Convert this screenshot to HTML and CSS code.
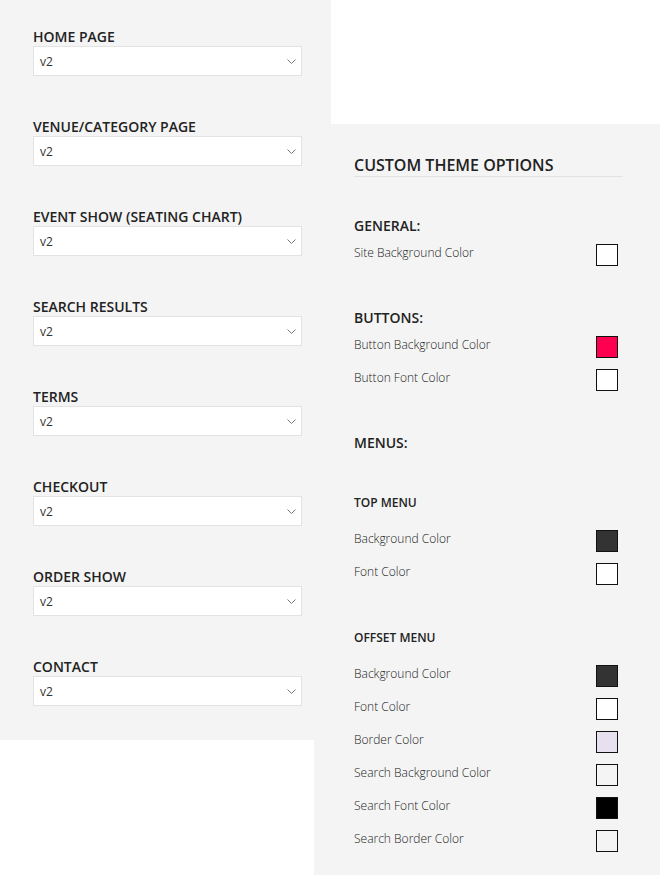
FILE: index.html
```html
<!DOCTYPE html>
<html>
<head>
<meta charset="utf-8">
<link rel="stylesheet" href="styles.css">
</head>
<body>
<div class="page">
  <div class="pages-panel">
    <div class="field">
      <div class="field-label">HOME PAGE</div>
      <div class="select"><span>v2</span><svg class="chev" width="9" height="5" viewBox="0 0 9 5"><path d="M0.5 0.5 L4.5 4.5 L8.5 0.5" fill="none" stroke="#777" stroke-width="1"/></svg></div>
    </div>
    <div class="field">
      <div class="field-label">VENUE/CATEGORY PAGE</div>
      <div class="select"><span>v2</span><svg class="chev" width="9" height="5" viewBox="0 0 9 5"><path d="M0.5 0.5 L4.5 4.5 L8.5 0.5" fill="none" stroke="#777" stroke-width="1"/></svg></div>
    </div>
    <div class="field">
      <div class="field-label">EVENT SHOW (SEATING CHART)</div>
      <div class="select"><span>v2</span><svg class="chev" width="9" height="5" viewBox="0 0 9 5"><path d="M0.5 0.5 L4.5 4.5 L8.5 0.5" fill="none" stroke="#777" stroke-width="1"/></svg></div>
    </div>
    <div class="field">
      <div class="field-label">SEARCH RESULTS</div>
      <div class="select"><span>v2</span><svg class="chev" width="9" height="5" viewBox="0 0 9 5"><path d="M0.5 0.5 L4.5 4.5 L8.5 0.5" fill="none" stroke="#777" stroke-width="1"/></svg></div>
    </div>
    <div class="field">
      <div class="field-label">TERMS</div>
      <div class="select"><span>v2</span><svg class="chev" width="9" height="5" viewBox="0 0 9 5"><path d="M0.5 0.5 L4.5 4.5 L8.5 0.5" fill="none" stroke="#777" stroke-width="1"/></svg></div>
    </div>
    <div class="field">
      <div class="field-label">CHECKOUT</div>
      <div class="select"><span>v2</span><svg class="chev" width="9" height="5" viewBox="0 0 9 5"><path d="M0.5 0.5 L4.5 4.5 L8.5 0.5" fill="none" stroke="#777" stroke-width="1"/></svg></div>
    </div>
    <div class="field">
      <div class="field-label">ORDER SHOW</div>
      <div class="select"><span>v2</span><svg class="chev" width="9" height="5" viewBox="0 0 9 5"><path d="M0.5 0.5 L4.5 4.5 L8.5 0.5" fill="none" stroke="#777" stroke-width="1"/></svg></div>
    </div>
    <div class="field">
      <div class="field-label">CONTACT</div>
      <div class="select"><span>v2</span><svg class="chev" width="9" height="5" viewBox="0 0 9 5"><path d="M0.5 0.5 L4.5 4.5 L8.5 0.5" fill="none" stroke="#777" stroke-width="1"/></svg></div>
    </div>
  </div>

  <div class="theme-panel">
    <h2 class="theme-title">CUSTOM THEME OPTIONS</h2>

    <h3 class="group-title first">GENERAL:</h3>
    <div class="row"><span>Site Background Color</span><span class="swatch sw-white"></span></div>

    <h3 class="group-title">BUTTONS:</h3>
    <div class="row"><span>Button Background Color</span><span class="swatch sw-red"></span></div>
    <div class="row"><span>Button Font Color</span><span class="swatch sw-white"></span></div>

    <h3 class="group-title menus">MENUS:</h3>

    <h4 class="sub-title top">TOP MENU</h4>
    <div class="row"><span>Background Color</span><span class="swatch sw-dark"></span></div>
    <div class="row"><span>Font Color</span><span class="swatch sw-white"></span></div>

    <h4 class="sub-title offset">OFFSET MENU</h4>
    <div class="row"><span>Background Color</span><span class="swatch sw-dark"></span></div>
    <div class="row"><span>Font Color</span><span class="swatch sw-white"></span></div>
    <div class="row"><span>Border Color</span><span class="swatch sw-lav"></span></div>
    <div class="row"><span>Search Background Color</span><span class="swatch sw-light"></span></div>
    <div class="row"><span>Search Font Color</span><span class="swatch sw-black"></span></div>
    <div class="row"><span>Search Border Color</span><span class="swatch sw-light"></span></div>
  </div>
</div>
</body>
</html>
```

FILE: styles.css
```css
* { box-sizing: border-box; }
html, body {
  margin: 0;
  padding: 0;
  background: #ffffff;
}
body {
  font-family: "Open Sans", "Noto Sans", sans-serif;
  color: #333;
}
.page {
  display: flex;
  align-items: flex-start;
  width: 660px;
  height: 875px;
  overflow: hidden;
}
.pages-panel {
  width: 331px;
  flex: none;
  background: #f4f4f4;
  padding: 26px 0 34px 33px;
  display: flex;
  flex-direction: column;
  gap: 40px;
}
.field-label {
  font-size: 14px;
  line-height: 19px;
  padding-top: 1px;
  font-weight: 600;
  color: #222;
}
.select {
  width: 269px;
  height: 30px;
  background: #fff;
  border: 1px solid #e3e3e3;
  display: flex;
  align-items: center;
  justify-content: space-between;
  padding: 0 5px 0 6px;
  font-size: 12px;
  color: #333;
}
.chev {
  display: block;
  margin-top: 1px;
}
.theme-panel {
  flex: none;
  width: 346px;
  margin-left: -17px;
  margin-top: 124px;
  background: #f4f4f4;
  padding: 28px 0 23px 40px;
}
.theme-title {
  margin: 0;
  width: 269px;
  padding-top: 3px;
  font-size: 16px;
  line-height: 21px;
  font-weight: 600;
  color: #222;
  border-bottom: 1px solid #e2e2e2;
}
.group-title {
  margin: 42px 0 8px 0;
  font-size: 14px;
  line-height: 20px;
  font-weight: 600;
  color: #222;
}
.group-title.first { margin-top: 39px; }
.group-title.menus { margin-bottom: 0; }
.sub-title {
  margin: 40px 0 19px 0;
  padding-top: 1px;
  font-size: 12px;
  line-height: 17px;
  font-weight: 600;
  color: #222;
}
.sub-title.offset { margin-top: 43px; }
.row {
  width: 264px;
  height: 22px;
  display: flex;
  justify-content: space-between;
  align-items: flex-start;
  font-size: 12px;
  line-height: 17px;
  font-weight: 300;
  color: #222;
}
.row + .row { margin-top: 11px; }
.swatch {
  width: 22px;
  height: 22px;
  border: 1px solid #111;
  flex: none;
}
.sw-white { background: #ffffff; }
.sw-red { background: #ff0050; }
.sw-dark { background: #333333; }
.sw-lav { background: #e7e0ee; }
.sw-light { background: #f4f4f4; }
.sw-black { background: #000000; }
```
